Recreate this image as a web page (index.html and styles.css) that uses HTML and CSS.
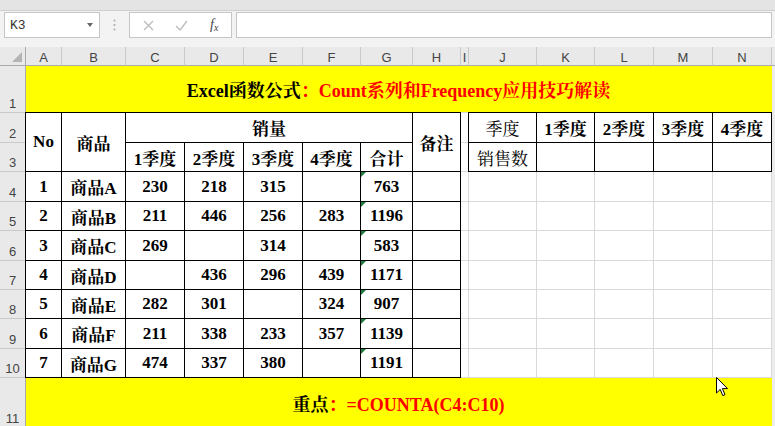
FILE: index.html
```html
<!DOCTYPE html>
<html lang="zh-CN">
<head>
<meta charset="utf-8">
<title>Excel</title>
<link rel="stylesheet" href="styles.css">
</head>
<body>
<div class="app">
  <div class="topband"></div>
  <div class="fbar">
    <div class="namebox"><span class="nb-text">K3</span><span class="nb-arrow"></span></div>
    <div class="sep">
      <svg width="3" height="12" viewBox="0 0 3 12"><circle cx="1.5" cy="1.5" r="1"/><circle cx="1.5" cy="6" r="1"/><circle cx="1.5" cy="10.5" r="1"/></svg>
    </div>
    <div class="fxbox">
      <svg class="ic" width="11" height="11" viewBox="0 0 11 11"><path d="M1 1 L10 10 M10 1 L1 10"/></svg>
      <svg class="ic" width="13" height="11" viewBox="0 0 13 11"><path d="M1 6 L5 10 L12 1"/></svg>
      <span class="fx">f<span class="fxs">x</span></span>
    </div>
    <div class="finput"></div>
  </div>

  <div class="sheet">
    <!-- column headers -->
    <div class="corner"><span class="tri"></span></div>
    <div class="ch">A</div><div class="ch">B</div><div class="ch">C</div><div class="ch">D</div><div class="ch">E</div><div class="ch">F</div><div class="ch">G</div><div class="ch">H</div><div class="ch">I</div><div class="ch">J</div><div class="ch">K</div><div class="ch">L</div><div class="ch">M</div><div class="ch">N</div><div class="ch fillh"></div>

    <!-- row 1 -->
    <div class="rh">1</div>
    <div class="c banner title"><span class="blk">Excel函数公式</span><span class="red">：Count系列和Frequency应用技巧解读</span></div>
    <div class="fill"></div>

    <!-- row 2 -->
    <div class="rh">2</div>
    <div class="c t top left span2">No</div>
    <div class="c t top span2">商品</div>
    <div class="c t top sales">销量</div>
    <div class="c t top span2">备注</div>
    <div class="c"></div>
    <div class="c t top left thin">季度</div>
    <div class="c t top">1季度</div>
    <div class="c t top">2季度</div>
    <div class="c t top">3季度</div>
    <div class="c t top">4季度</div>
    <div class="fill"></div>

    <!-- row 3 -->
    <div class="rh">3</div>
    <div class="c t">1季度</div>
    <div class="c t">2季度</div>
    <div class="c t">3季度</div>
    <div class="c t">4季度</div>
    <div class="c t">合计</div>
    <div class="c"></div>
    <div class="c t left thin">销售数</div>
    <div class="c t"></div>
    <div class="c t"></div>
    <div class="c t"></div>
    <div class="c t"></div>
    <div class="fill"></div>

    <!-- row 4 -->
    <div class="rh">4</div>
    <div class="c t left">1</div><div class="c t">商品A</div>
    <div class="c t">230</div><div class="c t">218</div><div class="c t">315</div><div class="c t"></div><div class="c t g">763</div><div class="c t"></div>
    <div class="c"></div><div class="c"></div><div class="c"></div><div class="c"></div><div class="c"></div><div class="c"></div>
    <div class="fill"></div>

    <!-- row 5 -->
    <div class="rh">5</div>
    <div class="c t left">2</div><div class="c t">商品B</div>
    <div class="c t">211</div><div class="c t">446</div><div class="c t">256</div><div class="c t">283</div><div class="c t g">1196</div><div class="c t"></div>
    <div class="c"></div><div class="c"></div><div class="c"></div><div class="c"></div><div class="c"></div><div class="c"></div>
    <div class="fill"></div>

    <!-- row 6 -->
    <div class="rh">6</div>
    <div class="c t left">3</div><div class="c t">商品C</div>
    <div class="c t">269</div><div class="c t"></div><div class="c t">314</div><div class="c t"></div><div class="c t g">583</div><div class="c t"></div>
    <div class="c"></div><div class="c"></div><div class="c"></div><div class="c"></div><div class="c"></div><div class="c"></div>
    <div class="fill"></div>

    <!-- row 7 -->
    <div class="rh">7</div>
    <div class="c t left">4</div><div class="c t">商品D</div>
    <div class="c t"></div><div class="c t">436</div><div class="c t">296</div><div class="c t">439</div><div class="c t g">1171</div><div class="c t"></div>
    <div class="c"></div><div class="c"></div><div class="c"></div><div class="c"></div><div class="c"></div><div class="c"></div>
    <div class="fill"></div>

    <!-- row 8 -->
    <div class="rh">8</div>
    <div class="c t left">5</div><div class="c t">商品E</div>
    <div class="c t">282</div><div class="c t">301</div><div class="c t"></div><div class="c t">324</div><div class="c t g">907</div><div class="c t"></div>
    <div class="c"></div><div class="c"></div><div class="c"></div><div class="c"></div><div class="c"></div><div class="c"></div>
    <div class="fill"></div>

    <!-- row 9 -->
    <div class="rh">9</div>
    <div class="c t left">6</div><div class="c t">商品F</div>
    <div class="c t">211</div><div class="c t">338</div><div class="c t">233</div><div class="c t">357</div><div class="c t g">1139</div><div class="c t"></div>
    <div class="c"></div><div class="c"></div><div class="c"></div><div class="c"></div><div class="c"></div><div class="c"></div>
    <div class="fill"></div>

    <!-- row 10 -->
    <div class="rh">10</div>
    <div class="c t left">7</div><div class="c t">商品G</div>
    <div class="c t">474</div><div class="c t">337</div><div class="c t">380</div><div class="c t"></div><div class="c t g">1191</div><div class="c t"></div>
    <div class="c"></div><div class="c"></div><div class="c"></div><div class="c"></div><div class="c"></div><div class="c"></div>
    <div class="fill"></div>

    <!-- row 11 -->
    <div class="rh">11</div>
    <div class="c banner note"><span class="blk">重点</span><span class="red">：=COUNTA(C4:C10)</span></div>
    <div class="fill"></div>
  </div>

  <svg class="cursor" width="13" height="20" viewBox="0 0 13 20"><path d="M0.5 0.5 L0.5 16 L4.2 12.4 L6.8 18.6 L9 17.6 L6.4 11.6 L11.5 11.6 Z"/></svg>
</div>
</body>
</html>
```

FILE: styles.css
```css
html, body {
  margin: 0;
  padding: 0;
  background: #ffffff;
}

.app {
  position: relative;
  width: 775px;
  height: 426px;
  overflow: hidden;
  background: #f3f3f3;
}

.topband {
  height: 10px;
  background: #e4e4e4;
  border-bottom: 1px solid #cfcfcf;
}

.fbar {
  height: 36px;
  display: flex;
  align-items: flex-start;
  padding: 1px 3px 0 4px;
  box-sizing: border-box;
  background: #f3f3f3;
}

.namebox {
  width: 96px;
  height: 26px;
  box-sizing: border-box;
  background: #ffffff;
  border: 1px solid #c6c6c6;
  display: flex;
  align-items: center;
  justify-content: space-between;
  padding: 0 6px 0 5px;
}

.nb-text {
  font: 13px "Liberation Mono", "DejaVu Sans Mono", monospace;
  color: #333333;
}

.nb-arrow {
  width: 0;
  height: 0;
  border-left: 3.5px solid transparent;
  border-right: 3.5px solid transparent;
  border-top: 4px solid #666666;
}

.sep {
  width: 29px;
  height: 26px;
  display: flex;
  align-items: center;
  justify-content: center;
}

.sep svg {
  fill: #a9a9a9;
}

.fxbox {
  width: 103px;
  height: 26px;
  box-sizing: border-box;
  background: #ffffff;
  border: 1px solid #c6c6c6;
  display: flex;
  align-items: center;
  padding: 0 0 0 13px;
  gap: 21px;
}

.ic path {
  fill: none;
  stroke: #bdbdbd;
  stroke-width: 1.4;
}

.fx {
  font: italic 14px "Liberation Serif", "Times New Roman", serif;
  color: #444444;
  margin-left: 1px;
}

.fxs {
  font-size: 10px;
  vertical-align: -2px;
}

.finput {
  flex: 1;
  margin-left: 4px;
  height: 26px;
  box-sizing: border-box;
  background: #ffffff;
  border: 1px solid #c6c6c6;
}

/* ---------- sheet grid ---------- */
.sheet {
  display: grid;
  grid-template-columns: 26px 36px 64px 59px 59px 59px 58px 52px 48px 8px 68px 58px 59px 59px 59px 3px;
  grid-template-rows: 19px 47px 30px 29px 30px 29px 30px 29px 29px 30px 29px 50px;
  background: #ffffff;
}

.corner {
  background: #e9e9e9;
  border-right: 1px solid #ababab;
  border-bottom: 1px solid #ababab;
  box-sizing: border-box;
  position: relative;
}

.tri {
  position: absolute;
  right: 3px;
  bottom: 3px;
  width: 0;
  height: 0;
  border-left: 10px solid transparent;
  border-bottom: 10px solid #b4b4b4;
}

.ch {
  background: #e9e9e9;
  border-right: 1px solid #c9c9c9;
  border-bottom: 1px solid #ababab;
  box-sizing: border-box;
  display: flex;
  align-items: center;
  justify-content: center;
  font: 13px "Liberation Sans", Arial, sans-serif;
  color: #444444;
  padding-top: 2px;
}

.fillh {
  border-right: none;
}

.rh {
  background: #e9e9e9;
  border-right: 1px solid #ababab;
  border-bottom: 1px solid #c9c9c9;
  box-sizing: border-box;
  display: flex;
  align-items: flex-end;
  justify-content: center;
  font: 13px "Liberation Sans", Arial, sans-serif;
  line-height: 15px;
  color: #444444;
  padding-bottom: 1px;
}

.fill {
  background: #ececec;
}

.c {
  box-sizing: border-box;
  border-right: 1px solid #d9d9d9;
  border-bottom: 1px solid #d9d9d9;
  display: flex;
  align-items: center;
  justify-content: center;
  white-space: nowrap;
  font-family: "Liberation Serif", "Times New Roman", "Noto Serif CJK SC", "Noto Sans CJK SC", serif;
  font-weight: bold;
  font-size: 17px;
  color: #000000;
  position: relative;
}

.t {
  border-right-color: #000000;
  border-bottom-color: #000000;
}

.t.top {
  box-shadow: 0 -1px 0 #000000;
}

.t.left {
  box-shadow: -1px 0 0 #000000;
}

.t.top.left {
  box-shadow: -1px 0 0 #000000, 0 -1px 0 #000000, -1px -1px 0 #000000;
}

.span2 {
  grid-row: span 2;
}

.sales {
  grid-column: span 5;
}

.thin {
  font-weight: normal;
}

.banner {
  grid-column: span 14;
  background: #ffff00;
  border-right-color: #ffff00;
  font-size: 18px;
}

.blk {
  color: #000000;
}

.red {
  color: #ff0000;
}

.g::before {
  content: "";
  position: absolute;
  top: 0;
  left: 0;
  width: 0;
  height: 0;
  border-top: 5px solid #1e7b3c;
  border-right: 5px solid transparent;
}

.cursor {
  position: absolute;
  left: 716px;
  top: 377px;
}

.cursor path {
  fill: #ffffff;
  stroke: #000000;
  stroke-width: 1;
  stroke-linejoin: miter;
}
```
